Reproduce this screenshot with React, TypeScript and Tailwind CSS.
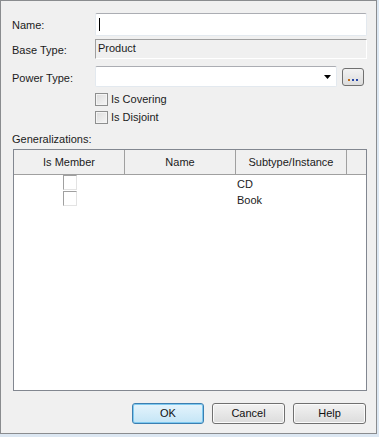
import React from 'react';

const font = { fontFamily: '"Liberation Sans", Arial, sans-serif' };

const Check: React.FC<{ label: string }> = ({ label }) => (
  <div className="flex items-center h-[13px] gap-[3px]">
    <span className="w-[13px] h-[13px] border border-[#8e8f8f] bg-gradient-to-br from-[#dcdcdc] to-[#f6f6f6] shadow-[inset_0_0_0_1px_#f4f4f4]" />
    <span>{label}</span>
  </div>
);

const CellCheck: React.FC = () => (
  <span className="block w-[14px] h-[15px] border-t border-l border-[#a0a0a0] border-r border-b border-r-[#e3e3e3] border-b-[#e3e3e3] bg-white" />
);

const Btn: React.FC<{ label: string; primary?: boolean }> = ({ label, primary }) => (
  <button
    className={
      primary
        ? 'w-[72px] h-[21px] rounded-[3px] border border-[#3c7fb1] bg-gradient-to-b from-[#e5f4fc] to-[#c4e5f6] shadow-[inset_0_0_0_1px_#7ec9f0] text-[11px] text-[#111]'
        : 'w-[73px] h-[21px] rounded-[3px] border border-[#707070] bg-gradient-to-b from-[#f2f2f2] to-[#dcdcdc] shadow-[inset_0_0_0_1px_#fbfbfb] text-[11px] text-[#111]'
    }
  >
    {label}
  </button>
);

export default function App() {
  return (
    <div className="w-[379px] h-[437px] bg-[#dce7f2]" style={font}>
      <div className="w-[377px] h-[434px] bg-[#f0f0f0] border border-[#8a8c8f] text-[11px] text-[#1b1b1b] flex flex-col pl-[11px] pr-[9px] pt-[12px]">
        {/* Name */}
        <div className="flex items-center h-[23px]">
          <span className="w-[83px] pt-[2px]">Name:</span>
          <div className="flex-1 h-[23px] bg-white border border-[#e3e9ef] border-t-[#abadb3] rounded-[2px] flex items-center pl-[3px]">
            <span className="w-px h-[13px] bg-black" />
          </div>
        </div>
        {/* Base type */}
        <div className="flex items-center h-[20px] mt-[3px]">
          <span className="w-[83px] pt-[2px]">Base Type:</span>
          <div className="flex-1 h-[20px] border border-t-[#a0a0a0] border-l-[#a0a0a0] border-r-[#ffffff] border-b-[#ffffff] pl-[2px] pt-[1px] leading-[14px]">
            Product
          </div>
        </div>
        {/* Power type */}
        <div className="flex items-center h-[21px] mt-[7px]">
          <span className="w-[83px] pt-[4px]">Power Type:</span>
          <div className="w-[242px] h-[21px] bg-white border border-[#e3e9ef] border-t-[#abadb3] rounded-[2px] flex items-center justify-end pr-[5px]">
            <svg width="7" height="4" viewBox="0 0 7 4">
              <path d="M0 0h7L3.5 4z" fill="#000" />
            </svg>
          </div>
          <div className="ml-[5px] w-[22px] h-[18px] rounded-[3px] border border-[#707070] bg-gradient-to-b from-[#f2f2f2] to-[#dcdcdc] flex items-end justify-center pb-[4px] gap-[2px]">
            <span className="w-[2px] h-[2px] bg-[#c46b14]" />
            <span className="w-[2px] h-[2px] bg-[#2848a8]" />
            <span className="w-[2px] h-[2px] bg-[#2848a8]" />
          </div>
        </div>
        <div className="ml-[83px] mt-[6px] flex flex-col gap-[5px]">
          <Check label="Is Covering" />
          <Check label="Is Disjoint" />
        </div>
        <div className="mt-[9px] h-[13px] leading-[13px]">Generalizations:</div>
        {/* Table */}
        <div className="mt-[3px] ml-px h-[242px] w-[354px] border border-[#828790] bg-white flex flex-col">
          <div className="flex h-[25px] bg-[#f0f0f0] border-b border-[#a0a0a0]">
            <div className="w-[111px] flex items-center justify-center border-r border-[#a0a0a0] pt-px">Is Member</div>
            <div className="w-[111px] flex items-center justify-center border-r border-[#a0a0a0] pt-px">Name</div>
            <div className="w-[111px] flex items-center justify-center border-r border-[#a0a0a0] pt-px">Subtype/Instance</div>
          </div>
          <div className="flex items-start h-[16px]">
            <div className="w-[111px] flex justify-center">
              <CellCheck />
            </div>
            <div className="w-[112px]" />
            <div className="leading-[13px] pt-[3px]">CD</div>
          </div>
          <div className="flex items-start h-[16px]">
            <div className="w-[111px] flex justify-center">
              <CellCheck />
            </div>
            <div className="w-[112px]" />
            <div className="leading-[13px] pt-[3px]">Book</div>
          </div>
        </div>
        <div className="flex justify-end gap-[8px] mt-[12px] pr-[1px] w-[354px] ml-px">
          <Btn label="OK" primary />
          <Btn label="Cancel" />
          <Btn label="Help" />
        </div>
      </div>
    </div>
  );
}
